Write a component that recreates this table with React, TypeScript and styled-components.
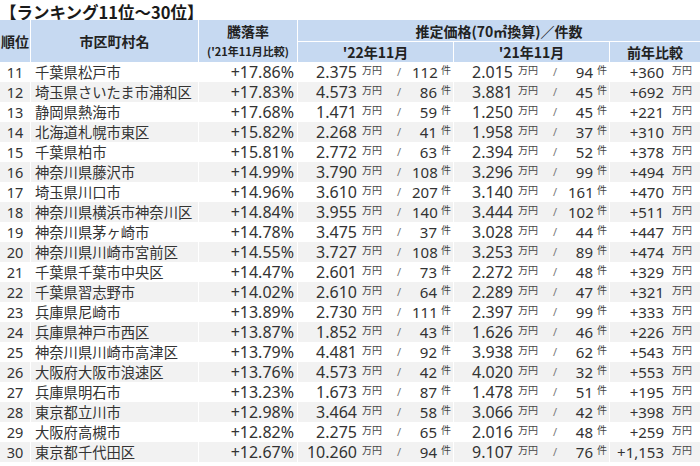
import React from 'react';
import styled, { createGlobalStyle } from 'styled-components';

const GlobalStyle = createGlobalStyle`
  body {
    margin: 0;
    background: #ffffff;
    font-family: "Noto Sans", "Noto Sans CJK JP", sans-serif;
    color: #333333;
  }
`;

const COLS = '30px 167px 98px 155px 155px 90px';

const Page = styled.div`
  width: 700px;
`;

const Title = styled.h1`
  margin: 0;
  height: 20px;
  line-height: 24px;
  font-family: "Noto Sans CJK JP", sans-serif;
  font-size: 16.5px;
  font-weight: 700;
  color: #1a1a1a;
`;

const Header = styled.div`
  position: relative;
  display: grid;
  grid-template-columns: ${COLS};
  grid-template-rows: 21px 20px;
  gap: 1px;
  background: #ffffff;
`;

const HeadCell = styled.div<{ $span?: string; $rows?: string }>`
  grid-column: ${({ $span }) => $span || 'auto'};
  grid-row: ${({ $rows }) => $rows || 'auto'};
  background: #c6d9f1;
  display: flex;
  flex-direction: column;
  align-items: center;
  justify-content: center;
  font-family: "Noto Sans CJK JP", sans-serif;
  font-size: 14px;
  font-weight: 700;
  color: #222222;
  white-space: nowrap;
  line-height: 1;
`;

const RateHead = styled.span`
  height: 21px;
  display: flex;
  align-items: center;
`;

const RateSub = styled.span`
  height: 21px;
  display: flex;
  align-items: center;
  font-size: 11px;
`;

const Row = styled.div<{ $alt: boolean }>`
  display: grid;
  grid-template-columns: ${COLS};
  column-gap: 1px;
  height: 20px;
  background: #ffffff;

  & > div {
    background: ${({ $alt }) => ($alt ? '#f2f2f2' : '#ffffff')};
  }
`;

const Cell = styled.div`
  display: flex;
  align-items: center;
  white-space: nowrap;
  line-height: 20px;
`;

const Rank = styled(Cell)`
  font-size: 14.5px;
  justify-content: center;
`;

const Name = styled(Cell)`
  font-family: "Noto Sans CJK JP", sans-serif;
  font-size: 14.3px;
  padding-left: 4px;
`;

const Rate = styled(Cell)`
  font-size: 16px;
  justify-content: flex-end;
  padding-right: 3px;
`;

const Group = styled.div`
  display: grid;
  grid-template-columns: 60px 28px 26px 25px 16px;
  height: 20px;
  white-space: nowrap;
`;

const Price = styled.span`
  font-size: 16px;
  text-align: right;
  padding-right: 1px;
  line-height: 21px;
`;

const Unit = styled.span<{ $pad?: number }>`
  font-family: "Noto Sans CJK JP", sans-serif;
  font-size: 10px;
  line-height: 1;
  padding-top: 3px;
  padding-left: ${({ $pad }) => $pad ?? 4}px;
  color: #444444;
`;

const Slash = styled.span`
  font-size: 11px;
  line-height: 1;
  padding-top: 4px;
  text-align: center;
  color: #777777;
`;

const Count = styled.span`
  font-size: 15px;
  text-align: right;
  line-height: 21px;
`;

const Diff = styled.div`
  display: grid;
  grid-template-columns: 56px 34px;
  height: 20px;
  white-space: nowrap;
`;

const DiffValue = styled.span`
  font-size: 15px;
  text-align: right;
  padding-right: 2px;
  line-height: 21px;
`;

type Item = [number, string, string, string, string, string, string, string];

const rows: Item[] = [
  [11, '千葉県松戸市', '+17.86%', '2.375', '112', '2.015', '94', '+360'],
  [12, '埼玉県さいたま市浦和区', '+17.83%', '4.573', '86', '3.881', '45', '+692'],
  [13, '静岡県熱海市', '+17.68%', '1.471', '59', '1.250', '45', '+221'],
  [14, '北海道札幌市東区', '+15.82%', '2.268', '41', '1.958', '37', '+310'],
  [15, '千葉県柏市', '+15.81%', '2.772', '63', '2.394', '52', '+378'],
  [16, '神奈川県藤沢市', '+14.99%', '3.790', '108', '3.296', '99', '+494'],
  [17, '埼玉県川口市', '+14.96%', '3.610', '207', '3.140', '161', '+470'],
  [18, '神奈川県横浜市神奈川区', '+14.84%', '3.955', '140', '3.444', '102', '+511'],
  [19, '神奈川県茅ヶ崎市', '+14.78%', '3.475', '37', '3.028', '44', '+447'],
  [20, '神奈川県川崎市宮前区', '+14.55%', '3.727', '108', '3.253', '89', '+474'],
  [21, '千葉県千葉市中央区', '+14.47%', '2.601', '73', '2.272', '48', '+329'],
  [22, '千葉県習志野市', '+14.02%', '2.610', '64', '2.289', '47', '+321'],
  [23, '兵庫県尼崎市', '+13.89%', '2.730', '111', '2.397', '99', '+333'],
  [24, '兵庫県神戸市西区', '+13.87%', '1.852', '43', '1.626', '46', '+226'],
  [25, '神奈川県川崎市高津区', '+13.79%', '4.481', '92', '3.938', '62', '+543'],
  [26, '大阪府大阪市浪速区', '+13.76%', '4.573', '42', '4.020', '32', '+553'],
  [27, '兵庫県明石市', '+13.23%', '1.673', '87', '1.478', '51', '+195'],
  [28, '東京都立川市', '+12.98%', '3.464', '58', '3.066', '42', '+398'],
  [29, '大阪府高槻市', '+12.82%', '2.275', '65', '2.016', '48', '+259'],
  [30, '東京都千代田区', '+12.67%', '10.260', '94', '9.107', '76', '+1,153'],
];

const PriceGroup: React.FC<{ price: string; count: string }> = ({ price, count }) => (
  <Group>
    <Price>{price}</Price>
    <Unit>万円</Unit>
    <Slash>/</Slash>
    <Count>{count}</Count>
    <Unit $pad={4}>件</Unit>
  </Group>
);

const App: React.FC = () => {
  return (
    <Page>
      <GlobalStyle />
      <Title>【ランキング11位～30位】</Title>
      <Header>
        <HeadCell $rows="1 / 3">順位</HeadCell>
        <HeadCell $rows="1 / 3">市区町村名</HeadCell>
        <HeadCell $rows="1 / 3">
          <RateHead>騰落率</RateHead>
          <RateSub>('21年11月比較)</RateSub>
        </HeadCell>
        <HeadCell $span="4 / 7">推定価格(70㎡換算)／件数</HeadCell>
        <HeadCell>'22年11月</HeadCell>
        <HeadCell>'21年11月</HeadCell>
        <HeadCell>前年比較</HeadCell>
      </Header>
      {rows.map(([rank, name, rate, p22, c22, p21, c21, diff], i) => (
        <Row key={rank} $alt={i % 2 === 1}>
          <Rank>{rank}</Rank>
          <Name>{name}</Name>
          <Rate>{rate}</Rate>
          <PriceGroup price={p22} count={c22} />
          <PriceGroup price={p21} count={c21} />
          <Diff>
            <DiffValue>{diff}</DiffValue>
            <Unit $pad={6}>万円</Unit>
          </Diff>
        </Row>
      ))}
    </Page>
  );
};

export default App;
